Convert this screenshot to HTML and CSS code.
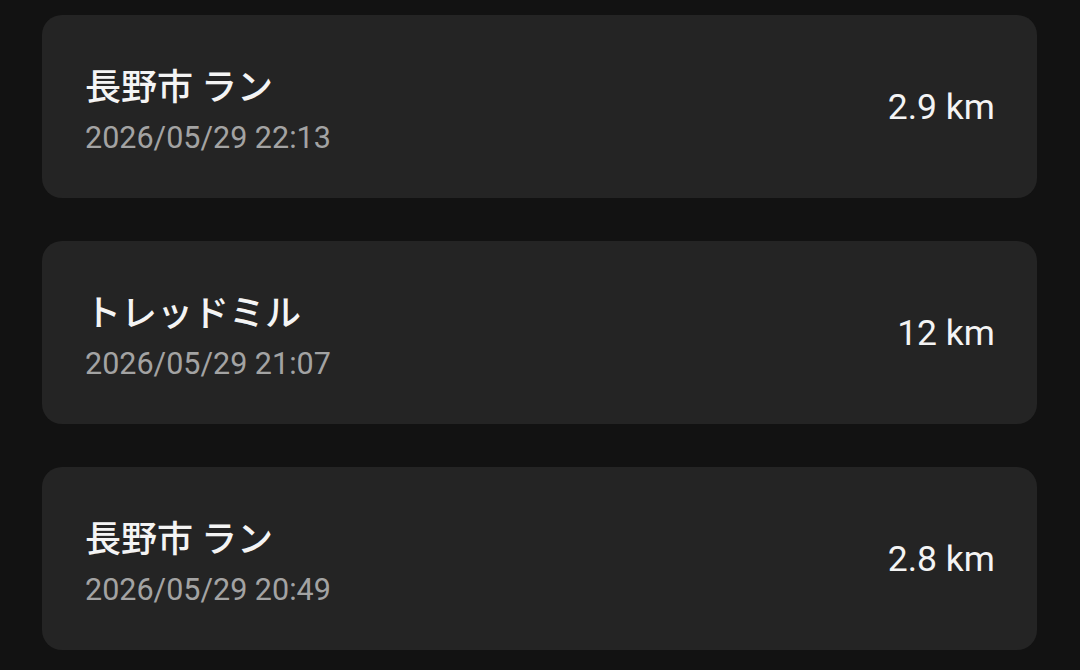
FILE: index.html
```html
<!DOCTYPE html>
<html lang="ja">
<head>
    <meta charset="UTF-8">
    <meta name="viewport" content="width=device-width, initial-scale=1.0">
    <title>アクティビティ</title>
    <link rel="stylesheet" href="styles.css">
</head>
<body>
    <div class="activity-list">
        <div class="activity-card">
            <div class="activity-info">
                <div class="activity-title">長野市 ラン</div>
                <div class="activity-date">2026/05/29 22:13</div>
            </div>
            <div class="activity-distance">2.9 km</div>
        </div>

        <div class="activity-card">
            <div class="activity-info">
                <div class="activity-title">トレッドミル</div>
                <div class="activity-date">2026/05/29 21:07</div>
            </div>
            <div class="activity-distance">12 km</div>
        </div>

        <div class="activity-card">
            <div class="activity-info">
                <div class="activity-title">長野市 ラン</div>
                <div class="activity-date">2026/05/29 20:49</div>
            </div>
            <div class="activity-distance">2.8 km</div>
        </div>
    </div>
</body>
</html>
```

FILE: styles.css
```css
:root {
    --background-color: #121212;
    --card-color: #242424;
    --text-primary: #f4f4f4;
    --text-secondary: #a3a3a3;
}

* {
    margin: 0;
    padding: 0;
    box-sizing: border-box;
}

body {
    font-family: Roboto, 'Noto Sans CJK JP', sans-serif;
    background-color: var(--background-color);
    color: var(--text-primary);
    height: 100vh;
    overflow: hidden;
}

.activity-list {
    display: flex;
    flex-direction: column;
    gap: 43px;
    padding: 15px 43px 0 42px;
}

.activity-card {
    height: 183px;
    background-color: var(--card-color);
    border-radius: 20px;
    padding: 0 42px 0 43px;
    display: flex;
    align-items: center;
    justify-content: space-between;
}

.activity-info {
    padding-top: 6px;
}

.activity-title {
    font-family: 'Noto Sans CJK JP', Roboto, sans-serif;
    font-size: 36px;
    line-height: 44px;
    font-weight: 500;
}

.activity-date {
    font-size: 30.5px;
    line-height: 40px;
    margin-top: 12px;
    color: var(--text-secondary);
}

.activity-distance {
    font-size: 35.5px;
    line-height: 44px;
}
```
